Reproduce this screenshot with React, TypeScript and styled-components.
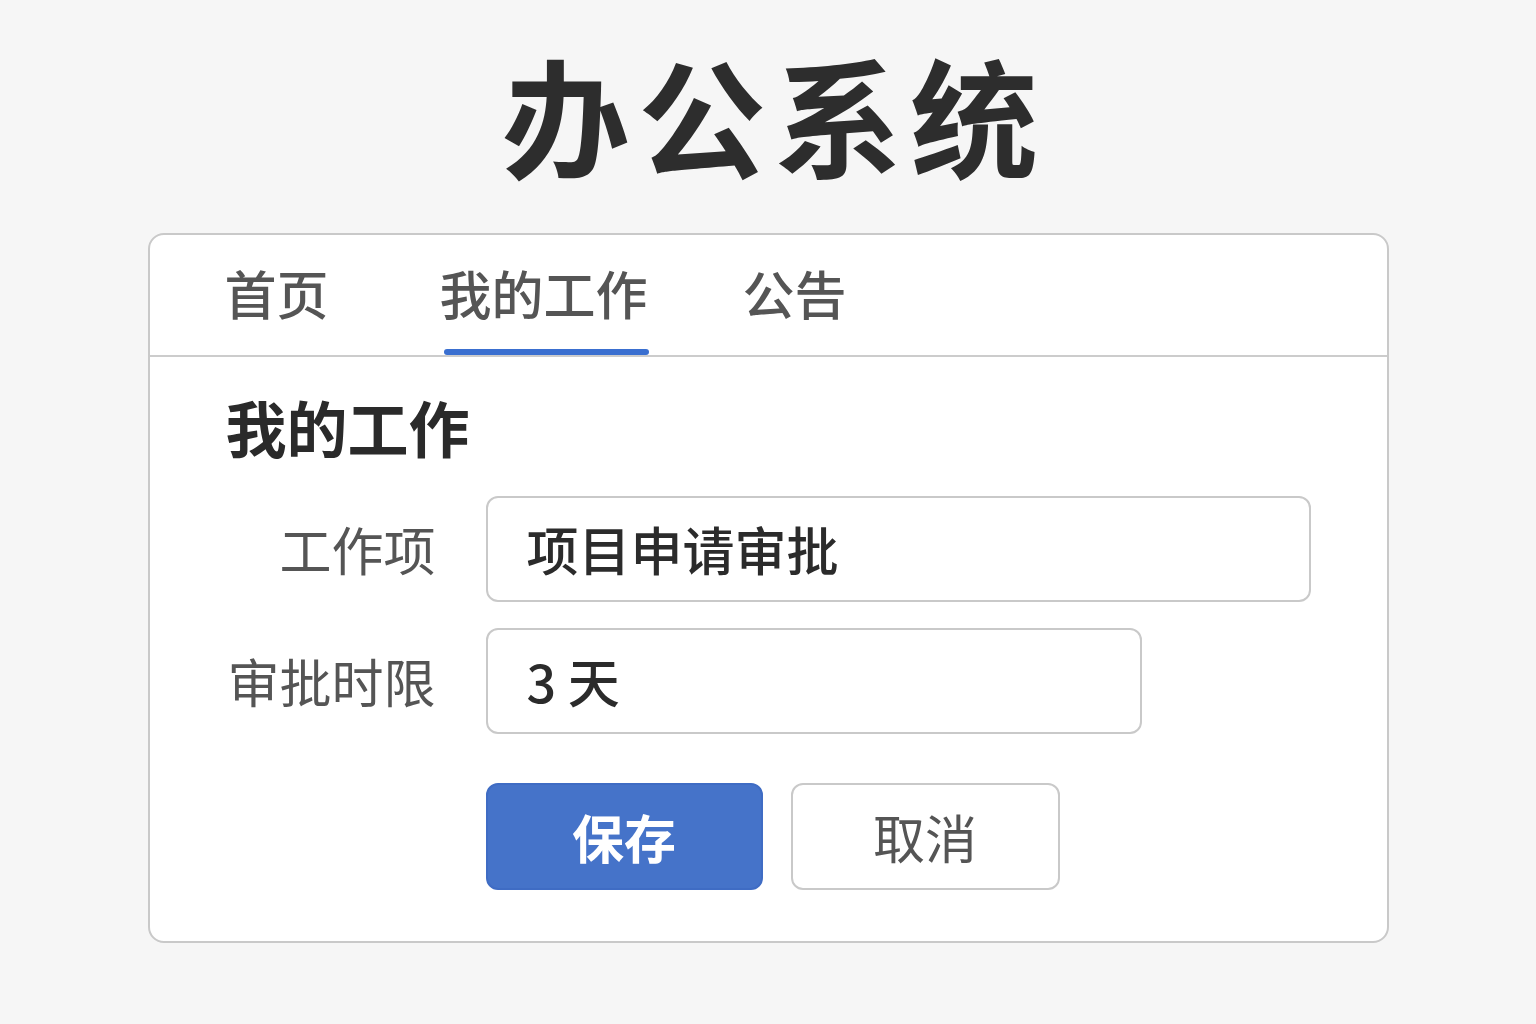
import React from 'react';
import styled, { createGlobalStyle } from 'styled-components';

const GlobalStyle = createGlobalStyle`
    html, body {
        margin: 0;
        padding: 0;
        background: #f6f6f6;
    }
    body {
        font-family: "Noto Sans CJK SC", "Noto Sans", sans-serif;
        color: #2b2b2b;
    }
`;

const tabs = [
    { label: '首页', width: 215 },
    { label: '我的工作', width: 303 },
    { label: '公告' },
];
const activeTab = '我的工作';

export default function App() {
    return (
        <>
            <GlobalStyle />
            <Page>
                <Title>办公系统</Title>
                <Card>
                    <TabBar>
                        {tabs.map(t => (
                            <Tab key={t.label} $width={t.width}>
                                <TabText $active={t.label === activeTab}>{t.label}</TabText>
                            </Tab>
                        ))}
                    </TabBar>
                    <Body>
                        <Heading>我的工作</Heading>
                        <Form>
                            <Label>工作项</Label>
                            <Field $width={825} value="项目申请审批" readOnly />
                            <Label>审批时限</Label>
                            <Field $width={656} value="3 天" readOnly />
                            <Actions>
                                <Button $primary $width={277}>保存</Button>
                                <Button $width={269}>取消</Button>
                            </Actions>
                        </Form>
                    </Body>
                </Card>
            </Page>
        </>
    );
}

const Page = styled.div`
    display: flex;
    flex-direction: column;
    align-items: center;
    min-height: 1024px;
    padding-top: 37px;
    box-sizing: border-box;
`;

const Title = styled.h1`
    margin: 0 0 42px;
    padding-left: 12px;
    font-size: 128px;
    line-height: 1.2;
    font-weight: 700;
    letter-spacing: 8px;
    color: #2d2d2d;
`;

const Card = styled.div`
    width: 1241px;
    box-sizing: border-box;
    background: #fff;
    border: 2px solid #c9c9c9;
    border-radius: 16px;
`;

const TabBar = styled.div`
    display: flex;
    align-items: flex-end;
    height: 120px;
    padding-left: 75px;
    border-bottom: 2px solid #cccccc;
`;

const Tab = styled.div<{ $width?: number }>`
    flex: 0 0 ${p => (p.$width ? `${p.$width}px` : 'auto')};
    padding-bottom: 35px;
`;

const TabText = styled.span<{ $active?: boolean }>`
    position: relative;
    display: inline-block;
    font-size: 52px;
    line-height: 1;
    font-weight: 500;
    color: #555;
    &::after {
        content: '';
        display: ${p => (p.$active ? 'block' : 'none')};
        position: absolute;
        left: 4px;
        right: -1px;
        bottom: -36px;
        height: 6px;
        border-radius: 3px;
        background: #3a6fd0;
    }
`;

const Body = styled.div`
    padding: 33px 76px 51px;
`;

const Heading = styled.h2`
    margin: 0 0 33px;
    font-size: 61px;
    line-height: 1.2;
    font-weight: 700;
    color: #2a2a2a;
`;

const Form = styled.div`
    display: grid;
    grid-template-columns: 210px 1fr;
    column-gap: 50px;
    row-gap: 26px;
    align-items: center;
`;

const Label = styled.div`
    text-align: right;
    font-size: 52px;
    font-weight: 400;
    color: #555;
`;

const Field = styled.input<{ $width: number }>`
    width: ${p => p.$width}px;
    height: 106px;
    box-sizing: border-box;
    padding: 0 0 0 39px;
    border: 2px solid #c9c9c9;
    border-radius: 12px;
    background: #fff;
    font-family: "Noto Sans CJK SC", "Noto Sans", sans-serif;
    font-size: 52px;
    font-weight: 500;
    color: #2b2b2b;
    outline: none;
`;

const Actions = styled.div`
    grid-column: 2;
    display: flex;
    gap: 28px;
    margin-top: 23px;
`;

const Button = styled.button<{ $primary?: boolean; $width: number }>`
    width: ${p => p.$width}px;
    height: 107px;
    box-sizing: border-box;
    border-radius: 12px;
    border: 2px solid ${p => (p.$primary ? '#3f6cc4' : '#c9c9c9')};
    background: ${p => (p.$primary ? '#4573c9' : '#fff')};
    color: ${p => (p.$primary ? '#fff' : '#555')};
    font-family: "Noto Sans CJK SC", "Noto Sans", sans-serif;
    font-size: 52px;
    font-weight: ${p => (p.$primary ? 700 : 400)};
    cursor: pointer;
`;
